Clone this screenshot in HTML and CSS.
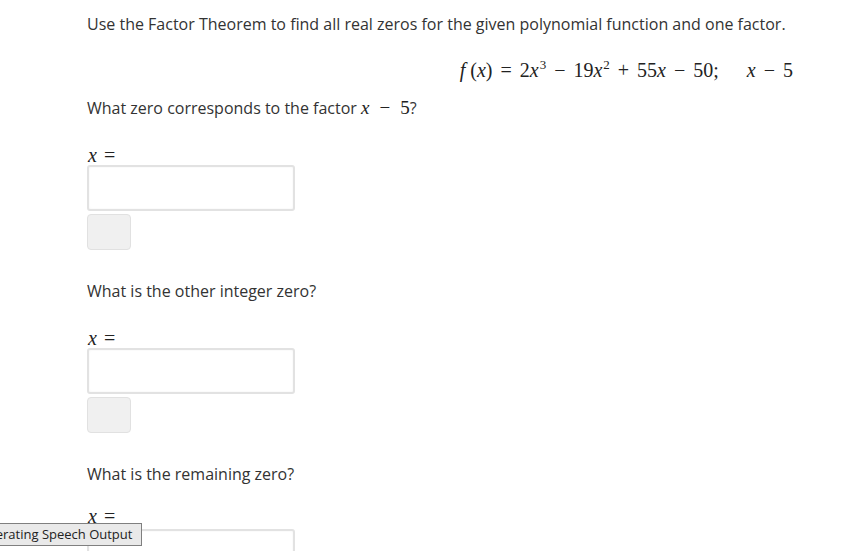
FILE: index.html
```html
<!DOCTYPE html>
<html>
<head>
<meta charset="utf-8">
<link rel="stylesheet" href="styles.css">
</head>
<body>
<div class="page">
  <p class="intro">Use the Factor Theorem to find all real zeros for the given polynomial function and one factor.</p>
  <div class="display">
    <span class="math"><i>f</i><span class="sp1"></span>(<i>x</i>)<span class="op">=</span>2<i>x</i><sup>3</sup><span class="op">−</span>19<i>x</i><sup>2</sup><span class="op">+</span>55<i>x</i><span class="op">−</span>50;<span class="quad"></span><i>x</i><span class="op">−</span>5</span>
  </div>

  <section class="part first">
    <p class="question">What zero corresponds to the factor <span class="math inl"><i>x</i><span class="op">−</span>5</span>?</p>
    <div class="label"><span class="math lbl"><i>x</i><span class="op">=</span></span></div>
    <div class="answer"></div>
    <div class="btn"></div>
  </section>

  <section class="part">
    <p class="question">What is the other integer zero?</p>
    <div class="label"><span class="math lbl"><i>x</i><span class="op">=</span></span></div>
    <div class="answer"></div>
    <div class="btn"></div>
  </section>

  <section class="part last">
    <p class="question">What is the remaining zero?</p>
    <div class="label"><span class="math lbl"><i>x</i><span class="op">=</span></span></div>
    <div class="answer"></div>
    <div class="btn"></div>
  </section>
</div>
<div class="tooltip">Generating Speech Output</div>
</body>
</html>
```

FILE: styles.css
```css
html, body {
  margin: 0;
  padding: 0;
  background: #ffffff;
  overflow: hidden;
}
body {
  font-family: "Open Sans", "Liberation Sans", sans-serif;
  font-size: 16px;
  color: #333333;
  width: 857px;
  height: 551px;
  position: relative;
}
.page {
  padding: 14px 0 0 87px;
  width: 706px;
}
p { margin: 0; }
.intro {
  line-height: 20px;
  height: 20px;
}
.display {
  text-align: right;
  margin-top: 27px;
  line-height: 20px;
  height: 20px;
}
.math {
  font-family: "Liberation Serif", "DejaVu Serif", serif;
  font-size: 20px;
  color: #222;
  white-space: nowrap;
  line-height: 0;
}
.math i { font-style: italic; }
.math sup {
  font-size: 13px;
  line-height: 0;
  vertical-align: 8px;
  padding-left: 1px;
}
.op { padding: 0 8px; }
.quad { display: inline-block; width: 28px; }
.sp1 { display: inline-block; width: 5px; }
.inl { font-size: 19px; }
.inl .op { padding: 0 10px; }
.question {
  line-height: 20px;
  height: 20px;
  margin-top: 31px;
}
.part.first { margin-top: 17px; }
.part.first .question { margin-top: 0; }
.label {
  margin-top: 33px;
  height: 14px;
  line-height: 10px;
  padding-left: 1px;
}
.part.last .label {
  margin-top: 30px;
  height: 15px;
  line-height: 6px;
}
.lbl { font-size: 20px; }
.lbl .op { padding: 0 7px; }
.answer {
  width: 204px;
  height: 42px;
  border: 2px solid #e2e2e2;
  border-radius: 3px;
  background: #fff;
  box-shadow: inset 0 0 2px #eeeeee;
}
.btn {
  margin-top: 3px;
  width: 42px;
  height: 34px;
  background: #f0f0f0;
  border: 1px solid #e1e1e1;
  border-radius: 4px;
}
.tooltip {
  position: absolute;
  left: -32px;
  top: 523px;
  height: 21px;
  line-height: 21px;
  padding: 0 9px 0 2px;
  background: #e9e9e9;
  border: 1px solid #7f7f7f;
  font-size: 13px;
  color: #222;
  white-space: nowrap;
}
```
